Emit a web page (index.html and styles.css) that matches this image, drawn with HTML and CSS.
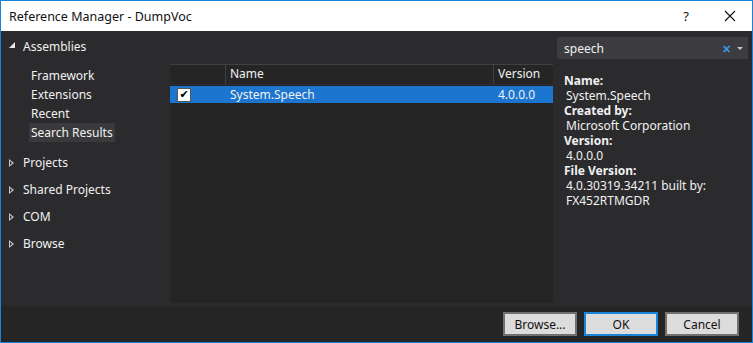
FILE: index.html
```html
<!DOCTYPE html>
<html lang="en">
<head>
    <meta charset="UTF-8">
    <title>Reference Manager - DumpVoc</title>
    <link rel="stylesheet" href="styles.css">
</head>
<body>
    <div class="window">
        <div class="titlebar">
            <span class="title">Reference Manager - DumpVoc</span>
            <span class="help">?</span>
            <span class="close">
                <svg width="12" height="12" viewBox="0 0 12 12"><path d="M1 1L11 11M11 1L1 11" stroke="#111" stroke-width="1.1" fill="none"/></svg>
            </span>
        </div>
        <div class="main">
            <div class="tree">
                <div class="group open">
                    <span class="arrow-open"></span>Assemblies
                </div>
                <div class="subitems">
                    <div class="sub">Framework</div>
                    <div class="sub">Extensions</div>
                    <div class="sub">Recent</div>
                    <div class="sub selected">Search Results</div>
                </div>
                <div class="group"><span class="arrow"></span>Projects</div>
                <div class="group"><span class="arrow"></span>Shared Projects</div>
                <div class="group"><span class="arrow"></span>COM</div>
                <div class="group"><span class="arrow"></span>Browse</div>
            </div>
            <div class="list">
                <div class="list-head">
                    <div class="col-check"></div>
                    <div class="col-name">Name</div>
                    <div class="col-version">Version</div>
                </div>
                <div class="list-row active">
                    <div class="col-check"><span class="checkbox">&#10004;</span></div>
                    <div class="col-name">System.Speech</div>
                    <div class="col-version">4.0.0.0</div>
                </div>
            </div>
            <div class="details">
                <div class="search">
                    <span class="search-text">speech</span>
                    <span class="search-clear">&#10005;</span>
                    <span class="search-drop"></span>
                </div>
                <div class="info">
                    <div class="label">Name:</div>
                    <div class="value">System.Speech</div>
                    <div class="label">Created by:</div>
                    <div class="value">Microsoft Corporation</div>
                    <div class="label">Version:</div>
                    <div class="value">4.0.0.0</div>
                    <div class="label">File Version:</div>
                    <div class="value">4.0.30319.34211 built by:</div>
                    <div class="value">FX452RTMGDR</div>
                </div>
            </div>
        </div>
        <div class="footer">
            <button class="btn">Browse...</button>
            <button class="btn default">OK</button>
            <button class="btn">Cancel</button>
        </div>
    </div>
</body>
</html>
```

FILE: styles.css
```css
body {
    margin: 0;
    font-family: "Noto Sans", "Open Sans", sans-serif;
    font-size: 12px;
    background: #2b2b2d;
}
.window {
    width: 753px;
    height: 343px;
    box-sizing: border-box;
    border: 1px solid #1883d7;
    display: flex;
    flex-direction: column;
    background: #2b2b2d;
    color: #f1f1f1;
}
.titlebar {
    height: 30px;
    background: #fff;
    color: #111;
    display: flex;
    align-items: center;
    padding-left: 8px;
    font-size: 12.5px;
}
.title {
    flex: 1;
}
.help {
    width: 44px;
    text-align: center;
    font-size: 13px;
}
.close {
    width: 44px;
    display: flex;
    justify-content: center;
}
.main {
    flex: 1;
    display: flex;
}
.tree {
    width: 168px;
    padding-top: 6px;
}
.group {
    height: 27px;
    display: flex;
    align-items: center;
    padding-left: 8px;
}
.group.open {
    height: 18px;
    margin-bottom: 11px;
}
.arrow-open {
    width: 0;
    height: 0;
    border-left: 6px solid transparent;
    border-bottom: 6px solid #e8e8e8;
    margin-right: 8px;
    margin-top: -2px;
}
.arrow {
    width: 0;
    height: 0;
    border-top: 4px solid transparent;
    border-bottom: 4px solid transparent;
    border-left: 5px solid #c8c8c8;
    margin-right: 9px;
    position: relative;
}
.arrow::after {
    content: "";
    position: absolute;
    left: -4px;
    top: -2px;
    border-top: 2px solid transparent;
    border-bottom: 2px solid transparent;
    border-left: 2px solid #2b2b2d;
}
.subitems {
    padding-left: 28px;
    margin-bottom: 7px;
}
.sub {
    height: 19px;
    line-height: 19px;
    padding-left: 2px;
    white-space: nowrap;
}
.sub.selected {
    background: #3a3a3d;
    width: fit-content;
    padding-right: 2px;
}
.list {
    width: 383px;
    margin: 33px 2px 3px 1px;
    background: #252526;
    border-top: 1px solid #3f3f46;
}
.list-head, .list-row {
    display: flex;
    align-items: center;
}
.list-head {
    height: 19px;
    border-bottom: 1px solid #2d2d30;
    margin-bottom: 1px;
}
.list-head .col-name, .list-head .col-version {
    border-left: 1px solid #3f3f46;
    height: 19px;
    line-height: 18px;
}
.col-check {
    width: 55px;
    display: flex;
    padding-left: 7px;
    box-sizing: border-box;
}
.col-name {
    width: 263px;
    padding-left: 4px;
}
.col-version {
    flex: 1;
    padding-left: 4px;
}
.list-row {
    height: 17px;
}
.list-row.active {
    background: #1c75cf;
}
.list-row .col-name, .list-row .col-version {
    padding-left: 5px;
}
.checkbox {
    width: 12px;
    height: 12px;
    background: #fff;
    border: 1px solid #555;
    color: #000;
    font-size: 11px;
    line-height: 12px;
    text-align: center;
    font-family: "DejaVu Sans", sans-serif;
}
.details {
    flex: 1;
    padding: 6px 4px 0 2px;
}
.search {
    height: 22px;
    background: #3c3c40;
    display: flex;
    align-items: center;
    padding-left: 7px;
}
.search-text {
    flex: 1;
}
.search-clear {
    color: #3b95e8;
    font-weight: bold;
    font-size: 11px;
    margin-right: 6px;
}
.search-drop {
    width: 0;
    height: 0;
    border-left: 3px solid transparent;
    border-right: 3px solid transparent;
    border-top: 3px solid #c8c8c8;
    margin-right: 5px;
}
.info {
    padding: 14px 0 0 7px;
    line-height: 15px;
}
.label {
    font-weight: bold;
}
.value {
    padding-left: 2px;
}
.footer {
    height: 36px;
    background: #252526;
    display: flex;
    justify-content: flex-end;
    align-items: center;
    gap: 7px;
    padding-right: 13px;
}
.btn {
    width: 74px;
    height: 24px;
    background: #dcdcdc;
    border: 2px solid #707070;
    font-family: "Noto Sans", "Open Sans", sans-serif;
    font-size: 12px;
    color: #111;
    padding: 0;
}
.btn.default {
    border-color: #1883d7;
}
```
